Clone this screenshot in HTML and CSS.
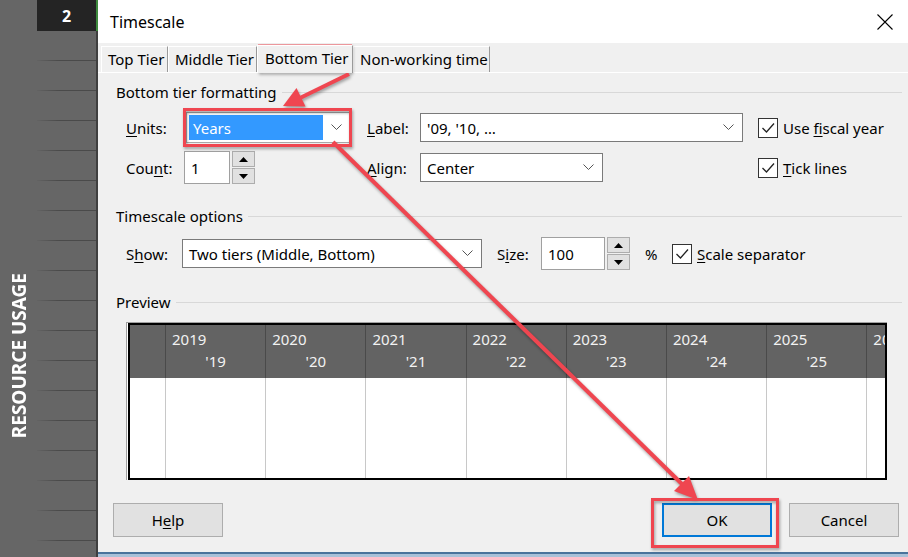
FILE: index.html
```html
<!DOCTYPE html>
<html lang="en">
  <head>
    <meta charset="UTF-8" />
    <meta name="viewport" content="width=device-width, initial-scale=1.0" />
    <title>Timescale</title>
    <link rel="stylesheet" href="styles.css">
  </head>
  <body>
    <aside class="sheet">
      <div class="sheet-label"><span>RESOURCE USAGE</span></div>
      <div class="sheet-rows">
        <div class="row-num">2</div>
        <div class="sheet-grid"></div>
      </div>
    </aside>

    <div class="dialog">
      <div class="titlebar">
        <span>Timescale</span>
        <svg class="close" width="16" height="16" viewBox="0 0 16 16"><path d="M0.5 0.5L15.5 15.5M15.5 0.5L0.5 15.5" stroke="#000" stroke-width="1.1" fill="none"/></svg>
      </div>

      <div class="dialog-body">
        <div class="tabs">
          <div class="tab tab-top">Top Tier</div>
          <div class="tab tab-middle">Middle Tier</div>
          <div class="tab tab-bottom active">Bottom Tier</div>
          <div class="tab tab-nonwork">Non-working time</div>
        </div>

        <div class="panel">
          <div class="group-title"><span>Bottom tier formatting</span></div>
          <div class="format-grid">
            <label><u>U</u>nits:</label>
            <div class="combo units-combo">
              <span class="selected">Years</span>
              <svg class="chev" width="11" height="7" viewBox="0 0 11 7"><path d="M0.5 0.5L5.5 5.5L10.5 0.5" fill="none" stroke="#555"/></svg>
            </div>
            <label><u>L</u>abel:</label>
            <div class="combo label-combo">
              <span>'09, '10, …</span>
              <svg class="chev" width="11" height="7" viewBox="0 0 11 7"><path d="M0.5 0.5L5.5 5.5L10.5 0.5" fill="none" stroke="#555"/></svg>
            </div>
            <div class="check">
              <span class="box"><svg width="16" height="16" viewBox="0 0 16 16"><path d="M2.5 8L6.5 12L14 3.5" fill="none" stroke="#222" stroke-width="1.3"/></svg></span>
              <span>Use <u>f</u>iscal year</span>
            </div>

            <label>Cou<u>n</u>t:</label>
            <div class="spin-field">
              <div class="field count-field">1</div>
              <div class="spinner">
                <span class="spin-btn"><svg width="9" height="5" viewBox="0 0 9 5"><path d="M0 5L4.5 0L9 5Z"/></svg></span>
                <span class="spin-btn"><svg width="9" height="5" viewBox="0 0 9 5"><path d="M0 0L4.5 5L9 0Z"/></svg></span>
              </div>
            </div>
            <label><u>A</u>lign:</label>
            <div class="combo align-combo">
              <span>Center</span>
              <svg class="chev" width="11" height="7" viewBox="0 0 11 7"><path d="M0.5 0.5L5.5 5.5L10.5 0.5" fill="none" stroke="#555"/></svg>
            </div>
            <div class="check">
              <span class="box"><svg width="16" height="16" viewBox="0 0 16 16"><path d="M2.5 8L6.5 12L14 3.5" fill="none" stroke="#222" stroke-width="1.3"/></svg></span>
              <span><u>T</u>ick lines</span>
            </div>
          </div>

          <div class="group-title spaced"><span>Timescale options</span></div>
          <div class="options-row">
            <label class="show-label">S<u>h</u>ow:</label>
            <div class="combo show-combo">
              <span>Two tiers (Middle, Bottom)</span>
              <svg class="chev" width="11" height="7" viewBox="0 0 11 7"><path d="M0.5 0.5L5.5 5.5L10.5 0.5" fill="none" stroke="#555"/></svg>
            </div>
            <label class="size-label">S<u>i</u>ze:</label>
            <div class="field size-field">100</div>
            <div class="spinner">
              <span class="spin-btn"><svg width="9" height="5" viewBox="0 0 9 5"><path d="M0 5L4.5 0L9 5Z"/></svg></span>
              <span class="spin-btn"><svg width="9" height="5" viewBox="0 0 9 5"><path d="M0 0L4.5 5L9 0Z"/></svg></span>
            </div>
            <span class="percent">%</span>
            <div class="check sep-check">
              <span class="box"><svg width="16" height="16" viewBox="0 0 16 16"><path d="M2.5 8L6.5 12L14 3.5" fill="none" stroke="#222" stroke-width="1.3"/></svg></span>
              <span><u>S</u>cale separator</span>
            </div>
          </div>

          <div class="group-title spaced"><span>Preview</span></div>
          <div class="preview">
            <div class="preview-inner">
              <div class="preview-grid">
                <div class="ph first"></div>
                <div class="ph"><span>2019</span><span class="ab">'19</span></div>
                <div class="ph"><span>2020</span><span class="ab">'20</span></div>
                <div class="ph"><span>2021</span><span class="ab">'21</span></div>
                <div class="ph"><span>2022</span><span class="ab">'22</span></div>
                <div class="ph"><span>2023</span><span class="ab">'23</span></div>
                <div class="ph"><span>2024</span><span class="ab">'24</span></div>
                <div class="ph"><span>2025</span><span class="ab">'25</span></div>
                <div class="ph"><span>2026</span></div>
                <div class="pb first"></div>
                <div class="pb"></div>
                <div class="pb"></div>
                <div class="pb"></div>
                <div class="pb"></div>
                <div class="pb"></div>
                <div class="pb"></div>
                <div class="pb"></div>
                <div class="pb"></div>
              </div>
            </div>
          </div>
        </div>

        <div class="buttons">
          <button class="btn">H<u>e</u>lp</button>
          <button class="btn btn-ok">OK</button>
          <button class="btn btn-cancel">Cancel</button>
        </div>
      </div>
      <div class="strip"></div>
    </div>

    <!-- callouts drawn on top of the screenshot -->
    <svg class="callouts" width="908" height="557" viewBox="0 0 908 557">
      <g fill="none" stroke="#ef4650" stroke-width="3">
        <rect x="259.5" y="46" width="91" height="25" />
        <rect x="184.5" y="109.5" width="166" height="36" />
        <rect x="652.5" y="499.5" width="125" height="47" />
      </g>
      <g stroke="#ef4650" stroke-width="4" fill="#ef4650">
        <line x1="349" y1="74" x2="300" y2="98" />
        <polygon points="283,106 305.5,106.5 296.5,88" stroke="none" />
        <line x1="333" y1="142" x2="684" y2="486" />
        <polygon points="698,500 674,491 689,476" stroke="none" />
      </g>
    </svg>
  </body>
</html>
```

FILE: styles.css
```css
body {
  margin: 0;
  width: 908px;
  height: 557px;
  overflow: hidden;
  display: flex;
  position: relative;
  background: #666;
  font-family: "Noto Sans", "Open Sans", sans-serif;
  font-size: 15px;
  color: #000;
}

u {
  text-underline-offset: 2px;
}

/* sheet behind the dialog */
.sheet {
  flex: 0 0 98px;
  display: flex;
  box-sizing: border-box;
  background: #666;
  border-right: 2px solid #3f3f3f;
}

.sheet-label {
  width: 37px;
  display: flex;
  justify-content: center;
  align-items: flex-start;
  padding-top: 273px;
  box-sizing: border-box;
}

.sheet-label span {
  writing-mode: vertical-rl;
  transform: rotate(180deg);
  color: #fff;
  font-weight: 700;
  font-size: 19px;
  white-space: nowrap;
}

.sheet-rows {
  flex: 1;
  display: flex;
  flex-direction: column;
}

.row-num {
  height: 31px;
  background: #242424;
  color: #fff;
  font-weight: 700;
  font-size: 16px;
  display: flex;
  align-items: center;
  justify-content: center;
  box-shadow: 2px 0 0 #3d8a3d;
}

.sheet-grid {
  flex: 1;
  background: repeating-linear-gradient(to bottom, transparent 0 29px, #4a4a4a 29px 30px);
  -webkit-mask-image: linear-gradient(to right, rgba(0, 0, 0, 0.1), #000 22px);
  mask-image: linear-gradient(to right, rgba(0, 0, 0, 0.1), #000 22px);
}

/* dialog */
.dialog {
  flex: 0 0 810px;
  min-width: 0;
  overflow: hidden;
  display: flex;
  flex-direction: column;
  background: #f0f0f0;
}

.titlebar {
  height: 43px;
  flex: 0 0 43px;
  box-sizing: border-box;
  background: #fff;
  display: flex;
  align-items: center;
  justify-content: space-between;
  padding: 0 15px 0 12px;
  font-size: 16px;
}

.dialog-body {
  flex: 1;
  min-width: 0;
  display: flex;
  flex-direction: column;
}

.tabs {
  height: 29px;
  box-sizing: border-box;
  display: flex;
  align-items: flex-end;
  padding-left: 3px;
}

.tab {
  height: 26px;
  line-height: 25px;
  box-sizing: border-box;
  padding-left: 6px;
  border-top: 1px solid #fff;
  border-left: 1px solid #fff;
  border-right: 1px solid #9a9a9a;
  white-space: nowrap;
}

.tab-top { width: 67px; }
.tab-middle { width: 89px; }
.tab-bottom { width: 96px; }
.tab-nonwork { width: 137px; }

.tab.active {
  height: 28px;
  padding-left: 7px;
  line-height: 24px;
  margin-bottom: -1px;
  position: relative;
  z-index: 1;
  background: #f0f0f0;
}

.panel {
  border-top: 1px solid #fff;
  padding: 9px 6px 0 18px;
  min-width: 0;
}

.group-title {
  height: 20px;
  line-height: 20px;
  display: flex;
  align-items: center;
  gap: 5px;
}

.group-title::after {
  content: "";
  flex: 1;
  border-top: 1px solid #d8d8d8;
}

.group-title.spaced {
  margin-top: 22px;
}

.format-grid {
  margin: 10px 0 0 10px;
  display: grid;
  grid-template-columns: 58px 183px 53px 338px auto;
  grid-template-rows: 31px 33px;
  row-gap: 8px;
  align-items: center;
}

.combo {
  height: 29px;
  box-sizing: border-box;
  border: 1px solid #7a7a7a;
  background: #fff;
  display: flex;
  align-items: center;
  justify-content: space-between;
  padding: 0 8px 0 6px;
  white-space: nowrap;
}

.units-combo {
  margin-left: 2px;
  width: 164px;
  height: 31px;
  padding: 2px 7px 2px 2px;
  align-items: stretch;
  border-color: #a8a8a8;
}

.units-combo .chev {
  align-self: center;
}

.selected {
  width: 134px;
  background: #3399ff;
  color: #fff;
  padding-left: 4px;
  box-sizing: border-box;
  display: flex;
  align-items: center;
}

.label-combo { width: 323px; }
.align-combo { width: 183px; }
.show-combo { width: 300px; }

.check {
  display: flex;
  align-items: center;
  gap: 5px;
  white-space: nowrap;
}

.check .box {
  width: 20px;
  height: 20px;
  box-sizing: border-box;
  border: 1px solid #333;
  background: #fff;
  display: flex;
  align-items: center;
  justify-content: center;
}

.spin-field {
  display: flex;
  align-items: center;
}

.field {
  height: 33px;
  box-sizing: border-box;
  border: 1px solid #a0a0a0;
  background: #fff;
  padding: 0 6px;
  display: flex;
  align-items: center;
}

.count-field { width: 46px; }
.size-field { width: 64px; }

.spinner {
  margin-left: 2px;
  width: 23px;
  height: 33px;
  display: flex;
  flex-direction: column;
  gap: 1px;
}

.spin-btn {
  flex: 1;
  box-sizing: border-box;
  background: #e1e1e1;
  border: 1px solid #adadad;
  display: flex;
  align-items: center;
  justify-content: center;
}

.options-row {
  margin: 11px 0 0 10px;
  height: 33px;
  display: flex;
  align-items: center;
}

.show-label { width: 56px; }

.size-label {
  width: 44px;
  margin-left: 15px;
}

.percent {
  width: 12px;
  margin-left: 15px;
}

.sep-check {
  margin-left: 15px;
}

/* preview table */
.preview {
  margin: 10px 15px 0 10px;
  border-top: 1px solid #a0a0a0;
  border-left: 1px solid #a0a0a0;
  padding-left: 1px;
  background: #fff;
  min-width: 0;
}

.preview-inner {
  border: 2px solid #000;
  height: 153px;
  overflow: hidden;
}

.preview-grid {
  display: grid;
  grid-template-columns: 35px repeat(8, 100.2px);
  grid-template-rows: 53px 100px;
}

.ph {
  background: #636363;
  color: #f2f2f2;
  border-left: 1px solid #4a4a4a;
  padding: 3px 0 0 6px;
  display: flex;
  flex-direction: column;
  line-height: 22px;
  white-space: nowrap;
}

.ph .ab {
  text-align: center;
  padding-right: 6px;
}

.pb {
  background: #fff;
  border-left: 1px solid #c8c8c8;
}

.ph.first,
.pb.first {
  border-left: none;
}

/* footer */
.buttons {
  margin-top: auto;
  display: flex;
  padding: 0 9px 15px 15px;
}

.btn {
  width: 110px;
  height: 34px;
  box-sizing: border-box;
  background: #e1e1e1;
  border: 1px solid #adadad;
  font: inherit;
  color: #000;
  padding: 0;
}

.btn-ok {
  margin-left: auto;
  border: 2px solid #0078d7;
}

.btn-cancel {
  margin-left: 17px;
}

.strip {
  height: 5px;
  flex: 0 0 5px;
  box-sizing: border-box;
  background: #a9c1d8;
  border-top: 2px solid #4a739b;
}

.callouts {
  position: absolute;
  left: 0;
  top: 0;
  pointer-events: none;
  filter: drop-shadow(1px 2px 1.5px rgba(0, 0, 0, 0.35));
}
```
